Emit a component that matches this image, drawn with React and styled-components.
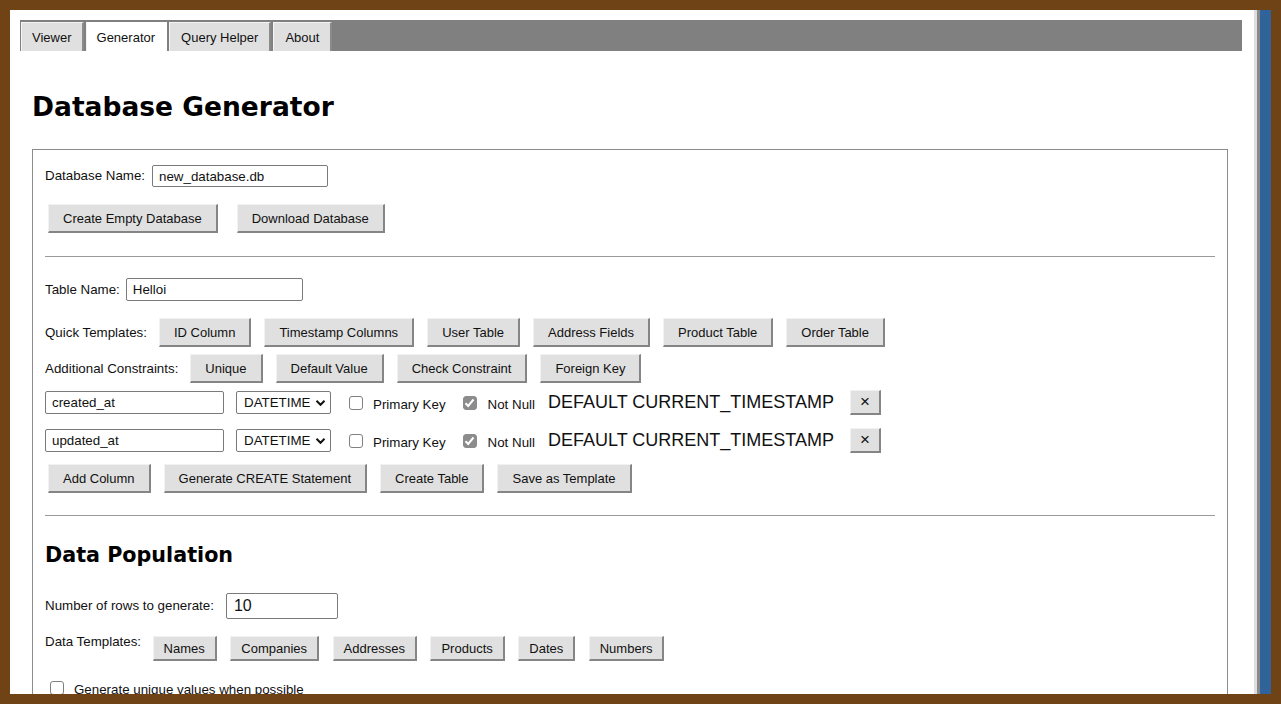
import React from 'react';
import styled, { createGlobalStyle } from 'styled-components';

const GlobalStyle = createGlobalStyle`
  html, body {
    margin: 0;
    padding: 0;
    height: 100%;
    overflow: hidden;
    background: #6f4315;
  }
  * {
    box-sizing: border-box;
  }
`;

const Frame = styled.div`
  height: 704px;
  padding: 10px;
  display: flex;
`;

const Viewport = styled.div`
  flex: 1;
  display: flex;
  background: #fff;
  overflow: hidden;
  font-family: "Liberation Sans", Arial, sans-serif;
  font-size: 13.333px;
  color: #111;
`;

const Page = styled.div`
  flex: 1;
  min-width: 0;
  padding: 10px 12px 0 10px;
`;

const Scrollbar = styled.div`
  width: 17px;
  border-left: 3px solid #dedede;
  box-shadow: inset 3px 0 0 #8a8a8a;
  background: #2f6399;
`;

const TabBar = styled.div`
  display: flex;
  align-items: flex-end;
  gap: 2px;
  height: 31px;
  padding: 2px 0 0 1px;
  background: #808080;
`;

const Tab = styled.div`
  height: 29px;
  display: flex;
  align-items: center;
  padding: 0 ${p => p.px || 10}px;
  background: ${p => (p.active ? '#fff' : '#e0e0e0')};
  border-top: 1px solid ${p => (p.active ? '#fff' : '#f4f4f4')};
  border-left: 1px solid #f4f4f4;
  border-right: 2px solid ${p => (p.active ? '#fff' : '#8a8a8a')};
  font-size: 13px;
`;

const Main = styled.div`
  padding: 0 14px 0 12px;
`;

const Title = styled.h1`
  margin: 40px 0 27px;
  font-family: "DejaVu Sans", Verdana, sans-serif;
  font-weight: bold;
  font-size: 26.5px;
  line-height: 31px;
  color: #000;
`;

const Panel = styled.div`
  border: 1px solid #8c8c8c;
  border-bottom: none;
  padding: 15px 12px 0 12px;
`;

const Row = styled.div`
  display: flex;
  align-items: ${p => p.align || 'center'};
  gap: ${p => p.gap || 0}px;
  margin-bottom: ${p => p.mb || 0}px;
  padding-left: ${p => p.pl || 0}px;
`;

const Label = styled.span`
  white-space: nowrap;
  margin-right: ${p => p.mr || 0}px;
  margin-top: ${p => p.mt || 0}px;
  line-height: 16px;
`;

const TextInput = styled.div`
  width: ${p => p.w}px;
  height: ${p => p.h || 23}px;
  display: flex;
  align-items: center;
  padding: 0 ${p => p.px || 6}px;
  border: 1px solid #7a7a7a;
  border-radius: 2px;
  background: #fff;
  font-size: ${p => p.fs || 13.333}px;
  white-space: nowrap;
`;

const Button = styled.div`
  display: flex;
  align-items: center;
  justify-content: center;
  height: ${p => (p.small ? 25 : 29)}px;
  padding: 0 ${p => (p.small ? 10 : 14)}px;
  background: #e0e0e0;
  border-top: 1px solid #f2f2f2;
  border-left: 1px solid #f2f2f2;
  border-right: 2px solid #858585;
  border-bottom: 2px solid #858585;
  white-space: nowrap;
  font-size: 13px;
`;

const CloseButton = styled(Button)`
  width: 31px;
  height: 25px;
  padding: 0 0 1px;
  margin-left: 16px;
  font-size: 17px;
`;

const Rule = styled.div`
  height: 1px;
  background: #9a9a9a;
  margin: ${p => p.mt}px 0 ${p => p.mb}px;
`;

const Select = styled.div`
  width: 95px;
  height: 23px;
  display: flex;
  align-items: center;
  justify-content: space-between;
  padding: 0 4px 0 7px;
  border: 1px solid #7a7a7a;
  border-radius: 2px;
  background: #fff;
  margin-left: 12px;
`;

const Check = styled.span`
  width: 14px;
  height: 14px;
  flex: none;
  border-radius: 3px;
  display: flex;
  align-items: center;
  justify-content: center;
  border: 1px solid ${p => (p.checked ? '#8c8c8c' : '#808080')};
  background: ${p => (p.checked ? '#8c8c8c' : '#fff')};
  margin: ${p => p.m || '0'};
`;

const CheckLabel = styled.span`
  margin: 4px 0 0 ${p => p.ml}px;
  white-space: nowrap;
`;

const BigText = styled.span`
  font-size: 18px;
  margin-left: 13px;
  white-space: nowrap;
`;

const SubTitle = styled.h3`
  margin: 27px 0 26px;
  font-family: "DejaVu Sans", Verdana, sans-serif;
  font-weight: bold;
  font-size: 20.7px;
  line-height: 24px;
  color: #000;
`;

const Chevron = () => (
  <svg width="11" height="8" viewBox="0 0 11 8">
    <path d="M1.5 1.8 L5.5 5.8 L9.5 1.8" fill="none" stroke="#111" strokeWidth="2" />
  </svg>
);

const Tick = () => (
  <svg width="11" height="10" viewBox="0 0 11 10">
    <path d="M1.5 5.2 L4.2 8 L9.5 1.5" fill="none" stroke="#fff" strokeWidth="2" />
  </svg>
);

const ColumnRow = ({ name, mb }) => (
  <Row mb={mb}>
    <TextInput w={179}>{name}</TextInput>
    <Select>
      <span>DATETIME</span>
      <Chevron />
    </Select>
    <Check m="0 0 0 18px" />
    <CheckLabel ml={10}>Primary Key</CheckLabel>
    <Check checked m="0 0 0 17px">
      <Tick />
    </Check>
    <CheckLabel ml={11}>Not Null</CheckLabel>
    <BigText>DEFAULT CURRENT_TIMESTAMP</BigText>
    <CloseButton>×</CloseButton>
  </Row>
);

const quickTemplates = ['ID Column', 'Timestamp Columns', 'User Table', 'Address Fields', 'Product Table', 'Order Table'];
const constraints = ['Unique', 'Default Value', 'Check Constraint', 'Foreign Key'];
const actions = ['Add Column', 'Generate CREATE Statement', 'Create Table', 'Save as Template'];
const dataTemplates = ['Names', 'Companies', 'Addresses', 'Products', 'Dates', 'Numbers'];

export default function App() {
  return (
    <>
      <GlobalStyle />
      <Frame>
        <Viewport>
          <Page>
            <TabBar>
              <Tab>Viewer</Tab>
              <Tab active>Generator</Tab>
              <Tab px={11}>Query Helper</Tab>
              <Tab px={11}>About</Tab>
            </TabBar>
            <Main>
              <Title>Database Generator</Title>
              <Panel>
                <Row mb={17}>
                  <Label mr={7}>Database Name:</Label>
                  <TextInput w={176} h={22}>new_database.db</TextInput>
                </Row>
                <Row gap={19} pl={3}>
                  <Button>Create Empty Database</Button>
                  <Button>Download Database</Button>
                </Row>
                <Rule mt={23} mb={21} />
                <Row mb={17}>
                  <Label mr={6}>Table Name:</Label>
                  <TextInput w={177}>Helloi</TextInput>
                </Row>
                <Row gap={13} mb={7}>
                  <Label mr={-1}>Quick Templates:</Label>
                  {quickTemplates.map(t => (
                    <Button key={t}>{t}</Button>
                  ))}
                </Row>
                <Row gap={13} mb={7}>
                  <Label mr={-1}>Additional Constraints:</Label>
                  {constraints.map(t => (
                    <Button key={t}>{t}</Button>
                  ))}
                </Row>
                <ColumnRow name="created_at" mb={13} />
                <ColumnRow name="updated_at" mb={11} />
                <Row gap={13} pl={3}>
                  {actions.map(t => (
                    <Button key={t}>{t}</Button>
                  ))}
                </Row>
                <Rule mt={22} mb={0} />
                <SubTitle>Data Population</SubTitle>
                <Row mb={17}>
                  <Label mr={12}>Number of rows to generate:</Label>
                  <TextInput w={112} h={26} fs={16} px={7}>10</TextInput>
                </Row>
                <Row align="flex-start" gap={13.5} mb={17}>
                  <Label mr={-2} mt={-2}>Data Templates:</Label>
                  {dataTemplates.map(t => (
                    <Button small key={t}>{t}</Button>
                  ))}
                </Row>
                <Row pl={5}>
                  <Check />
                  <CheckLabel ml={10}>Generate unique values when possible</CheckLabel>
                </Row>
              </Panel>
            </Main>
          </Page>
          <Scrollbar />
        </Viewport>
      </Frame>
    </>
  );
}
